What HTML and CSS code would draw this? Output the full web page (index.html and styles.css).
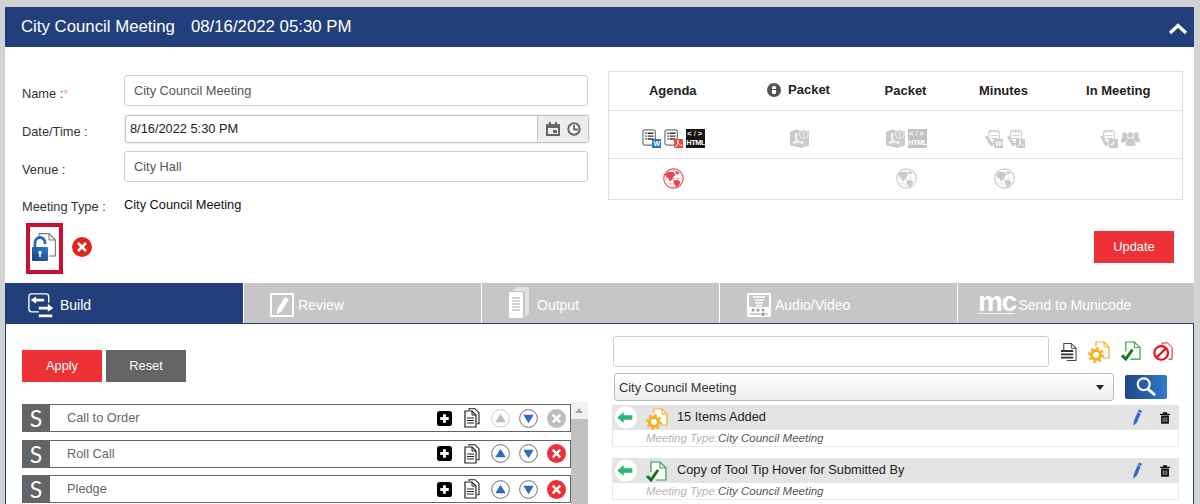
FILE: index.html
```html
<!DOCTYPE html>
<html lang="en">
<head>
<meta charset="utf-8">
<title>City Council Meeting</title>
<link rel="stylesheet" href="styles.css">
</head>
<body>
<svg class="defs" aria-hidden="true">
  <defs>
    <linearGradient id="lockGrad" x1="0" y1="1" x2="1" y2="0"><stop offset="0" stop-color="#1a3f7e"/><stop offset="1" stop-color="#2f7bd0"/></linearGradient>
    <symbol id="x-circle" viewBox="0 0 20 20"><circle cx="10" cy="10" r="10" fill="currentColor"/><path d="M6 6l8 8M14 6l-8 8" stroke="#fff" stroke-width="2.600" fill="none"/></symbol>
    <symbol id="agenda" viewBox="0 0 20 20"><rect x="1" y="1" width="13" height="16" rx="2" fill="#fff" stroke="#777" stroke-width="1.300"/><path d="M3.500 4.500h1.500M6 4.500h6M3.500 7.500h1.500M6 7.500h6M3.500 10.500h1.500M6 10.500h6" stroke="#333" stroke-width="1.500" fill="none"/></symbol>
    <symbol id="acrobat" viewBox="0 0 20 20"><path d="M0 3l7-2.500 5 1.500 8 0v15l-8 3-12-3z" fill="currentColor"/><path d="M3 15c2.500-1 4-5 4-9 0-3-1.500-1-.5 3s3 5 6 6c2.500.5 1.500-1.500-1-1.500-3 0-6 1-8.500 1.500" stroke="#fff" stroke-width="1.100" fill="none"/><circle cx="14.500" cy="5.500" r="4.500" fill="currentColor" stroke="#fff" stroke-width=".8"/><path d="M14.500 3v3M14.500 7v1" stroke="#fff" stroke-width="1.200"/></symbol>
    <symbol id="globe" viewBox="0 0 20 20"><circle cx="10" cy="10" r="9.300" fill="#fff" stroke="currentColor" stroke-width="1"/><path d="M10 .7v18.600M1 10h18M3 5h14M3 15h14M10 1c-5 3-5 15 0 18M10 1c5 3 5 15 0 18" stroke="currentColor" stroke-width=".3" fill="none"/><path d="M2 6l3-2.500 5 .5 2 2.500-2.500 2-.5 2.500-2.500 1.500-1.500-3-2-1zM10 12l4-.5 2.500 1.500-1 3-2.500 2.500-2-3zM12 2.500l3.500 1.500-1 2-2.500-1z" fill="currentColor"/></symbol>
    <symbol id="notepad" viewBox="0 0 20 20"><rect x="5" y="2" width="11" height="13" rx="1" fill="#fff" stroke="currentColor" stroke-width="1.200"/><path d="M7 1v3M10 1v3M13 1v3M7 7h7M7 10h7M9 13h3" stroke="currentColor" stroke-width="1" fill="none"/><path d="M1 8l2-1 7 9-1 2-2 0z" fill="currentColor"/></symbol>
    <symbol id="people" viewBox="0 0 20 20"><circle cx="4" cy="6" r="2.700" fill="currentColor"/><circle cx="16" cy="6" r="2.700" fill="currentColor"/><path d="M0 14c0-4 1-6 4-6s4 2 4 6zM12 14c0-4 1-6 4-6s4 2 4 6z" fill="currentColor"/><circle cx="10" cy="6.500" r="3.300" fill="currentColor" stroke="#fff" stroke-width=".6"/><path d="M4.500 18c0-6 2-8.500 5.500-8.500s5.500 2.500 5.500 8.500z" fill="currentColor" stroke="#fff" stroke-width=".6"/></symbol>
    <symbol id="copy" viewBox="0 0 16 20"><path d="M5 2V.7h6l4 4v11h-2" fill="none" stroke="#222" stroke-width="1.100"/><path d="M1 3h7l4 4v12H1z" fill="#fff" stroke="#222" stroke-width="1.200"/><path d="M8 3v4h4" fill="none" stroke="#222"/><path d="M3 10h7M3 12.500h7M3 15h7" stroke="#222" stroke-width="1"/></symbol>
    <symbol id="plus" viewBox="0 0 16 16"><rect width="16" height="16" rx="3" fill="#000"/><path d="M8 3.500v9M3.500 8h9" stroke="#fff" stroke-width="3"/></symbol>
    <symbol id="arrow-up" viewBox="0 0 20 20"><circle cx="10" cy="10" r="9.300" fill="#fff" stroke="#666" stroke-width="1"/><path d="M10 5l5.500 9h-11z" fill="#2b6cc4"/></symbol>
    <symbol id="arrow-down" viewBox="0 0 20 20"><circle cx="10" cy="10" r="9.300" fill="#fff" stroke="#666" stroke-width="1"/><path d="M10 15l-5.500-9h11z" fill="#2b6cc4"/></symbol>
    <symbol id="arrow-up-off" viewBox="0 0 20 20"><circle cx="10" cy="10" r="9.300" fill="#fff" stroke="#c8c8c8" stroke-width="1"/><path d="M10 5l5.500 9h-11z" fill="#bcbcbc"/></symbol>
    <symbol id="gear-doc" viewBox="0 0 22 22"><path d="M8 5V1h8l5 5v11h-7" fill="#fff" stroke="#f9ae1a" stroke-width="1.200"/><path d="M16 1v5h5" fill="none" stroke="#f9ae1a"/><circle cx="8" cy="14" r="4.500" fill="#fff" stroke="#f9ae1a" stroke-width="3"/><circle cx="8" cy="14" r="7" fill="none" stroke="#f9ae1a" stroke-width="2" stroke-dasharray="2.500 3"/></symbol>
    <symbol id="check-doc" viewBox="0 0 22 22"><path d="M5 11V1h9l6 6v12H10" fill="#fff" stroke="#2e9b3d" stroke-width="1.200"/><path d="M14 1v6h6" fill="none" stroke="#2e9b3d"/><path d="M1 15l4 4 7-10" fill="none" stroke="#0c7a15" stroke-width="3"/></symbol>
    <symbol id="pencil" viewBox="0 0 10 18"><path d="M6.500 0l3.500 1.500L4 15l-3.500 3 .2-4.500z" fill="#2b6cc4"/><path d="M5.500 3l3.500 1.500" stroke="#fff" stroke-width=".8"/></symbol>
    <symbol id="trash" viewBox="0 0 14 16"><path d="M0 3h14M5 3V1h4v2" stroke="#111" stroke-width="1.800" fill="none"/><path d="M1.500 4.500h11V16h-11z" fill="#111"/><path d="M4.500 7v6.500M7 7v6.500M9.500 7v6.500" stroke="#ddd" stroke-width=".9"/></symbol>
    <symbol id="back" viewBox="0 0 28 28"><circle cx="14" cy="14" r="14" fill="#fff"/><path d="M3 14l8-7v4h11v6H11v4z" fill="#2bb673"/></symbol>
  </defs>
</svg>

<header class="panel-head">
  <h1 class="panel-title"><span>City Council Meeting</span><span>08/16/2022 05:30 PM</span></h1>
  <svg class="chevron" viewBox="0 0 20 12"><path d="M2 10l8-7.500L18 10" fill="none" stroke="#fff" stroke-width="3.200"/></svg>
</header>

<section class="meeting">
  <div class="meeting-form">
    <div class="field field-name">
      <label>Name :<em>*</em></label>
      <input class="text-input" value="City Council Meeting">
    </div>
    <div class="field field-date">
      <label>Date/Time :</label>
      <div class="date-group">
        <span class="date-value">8/16/2022 5:30 PM</span>
        <span class="date-addon">
          <svg viewBox="0 0 14 14" class="addon-icon"><path d="M0 2h3V0h2v2h4V0h2v2h3v12H0z" fill="#666"/><path d="M2 6h10v6H2z" fill="#eee"/><path d="M7 8h4v3H7z" fill="#666"/></svg>
          <svg viewBox="0 0 14 14" class="addon-icon"><circle cx="7" cy="7" r="5.700" fill="#fff" stroke="#666" stroke-width="2"/><path d="M7 3v4.500h4" fill="none" stroke="#666" stroke-width="1.800"/></svg>
        </span>
      </div>
    </div>
    <div class="field field-venue">
      <label>Venue :</label>
      <input class="text-input" value="City Hall">
    </div>
    <div class="field field-type">
      <label>Meeting Type :</label>
      <span class="type-value">City Council Meeting</span>
    </div>
    <div class="lock-row">
      <span class="lock-box">
        <svg viewBox="0 0 24 28" class="lock-icon">
          <path d="M7 5V.6h10l6.400 6.400v16H17" fill="none" stroke="#777" stroke-width="1.100"/><path d="M17 .6V7h6.400" fill="none" stroke="#777"/>
          <path d="M3 14V9.500a5 5 0 0 1 10 0V11" fill="none" stroke="#2a68b8" stroke-width="2.800"/>
          <rect x="0" y="14" width="16" height="14" rx="1" fill="url(#lockGrad)"/>
          <circle cx="8" cy="19.500" r="1.700" fill="#fff"/><path d="M7.200 20h1.600v4H7.200z" fill="#fff"/>
        </svg>
      </span>
      <svg class="icon-x-lg"><use href="#x-circle"/></svg>
    </div>
  </div>

  <div class="meeting-side">
    <table class="docs">
      <colgroup><col class="c1"><col class="c2"><col class="c3"><col class="c4"><col class="c5"></colgroup>
      <tr class="docs-head">
        <th>Agenda</th>
        <th><span class="packet-alert"><svg viewBox="0 0 14 14" class="info"><circle cx="7" cy="7" r="7" fill="#555"/><rect x="5" y="3" width="4" height="8" rx="1.500" fill="#fff"/><path d="M5 6.500h4" stroke="#555"/></svg>Packet</span></th>
        <th>Packet</th>
        <th>Minutes</th>
        <th>In Meeting</th>
      </tr>
      <tr class="docs-icons">
        <td><div class="icon-set">
          <span class="doc"><svg><use href="#agenda"/></svg><b class="badge badge-w">W</b></span>
          <span class="doc"><svg><use href="#agenda"/></svg><b class="badge badge-p"><svg viewBox="0 0 9 9"><path d="M1 8c2-1 3-3 3-6 0-2-1 0 0 2s2 2 4 2.500" fill="none" stroke="#fff" stroke-width="1"/></svg></b></span>
          <span class="html"><i>&lt;<u>/</u>&gt;</i>HTML</span>
        </div></td>
        <td class="off"><div class="icon-set"><svg class="ic"><use href="#acrobat"/></svg></div></td>
        <td class="off"><div class="icon-set"><svg class="ic"><use href="#acrobat"/></svg><span class="html html-off"><i>&lt;<u>/</u>&gt;</i>HTML</span></div></td>
        <td class="off"><div class="icon-set">
          <span class="doc"><svg><use href="#notepad"/></svg><b class="badge badge-off">W</b></span>
          <span class="doc"><svg><use href="#notepad"/></svg><b class="badge badge-off"><svg viewBox="0 0 9 9"><path d="M1 8c2-1 3-3 3-6 0-2-1 0 0 2s2 2 4 2.500" fill="none" stroke="#fff" stroke-width="1"/></svg></b></span>
        </div></td>
        <td class="off"><div class="icon-set">
          <span class="doc"><svg><use href="#notepad"/></svg><b class="badge badge-off">&#10003;</b></span>
          <svg class="ic"><use href="#people"/></svg>
        </div></td>
      </tr>
      <tr class="docs-web">
        <td class="web-on"><div class="icon-set"><svg class="globe"><use href="#globe"/></svg></div></td>
        <td></td>
        <td class="off"><div class="icon-set"><svg class="globe"><use href="#globe"/></svg></div></td>
        <td class="off"><div class="icon-set"><svg class="globe"><use href="#globe"/></svg></div></td>
        <td></td>
      </tr>
    </table>
    <button class="btn btn-red btn-update">Update</button>
  </div>
</section>

<nav class="tabs">
  <a class="tab tab-active">
    <svg viewBox="0 0 30 28" class="tab-icon"><rect x="1" y="1" width="22" height="20" rx="3" fill="none" stroke="#fff" stroke-width="1.500"/><path d="M3 8l6-4v2.500h9v3H9V12z" fill="#fff"/><rect x="12" y="11" width="17" height="16" rx="2" fill="#223f7c"/><path d="M28 17l-6 4v-2.500h-10v-3h10V12z" fill="#fff"/><path d="M12 24h15v3H12z" fill="#fff"/></svg><span>Build</span>
  </a>
  <a class="tab">
    <svg viewBox="0 0 24 24" class="tab-icon tab-icon-sq"><rect x="1" y="1" width="22" height="22" fill="none" stroke="#fff" stroke-width="2"/><path d="M15 4l4 2-8 13-4 2 .5-5z" fill="#fff"/></svg><span>Review</span>
  </a>
  <a class="tab">
    <svg viewBox="0 0 24 32" class="tab-icon tab-icon-tall"><path d="M8 1h12v26" fill="none" stroke="#fff"/><path d="M5 3h13v26" fill="none" stroke="#fff"/><rect x="1" y="5" width="14" height="26" rx="1" fill="#fff"/><path d="M4 11h8M4 14h8M4 17h8M4 20h8M4 23h8" stroke="#c6c6c6" stroke-width="1.500"/></svg><span>Output</span>
  </a>
  <a class="tab tab-av">
    <svg viewBox="0 0 24 24" class="tab-icon tab-icon-sq"><rect width="24" height="24" rx="1.500" fill="#fff"/><path d="M2 2h20v12H2z" fill="#c6c6c6"/><path d="M6 4h12M8 7h9M8 10h8M9 12.500h6" stroke="#fff" stroke-width="1.300"/><circle cx="6" cy="17" r="1.500" fill="#999"/><circle cx="11" cy="17" r="1.500" fill="#999"/><circle cx="16" cy="17" r="1.500" fill="#999"/><path d="M3 21h18" stroke="#999"/><rect x="15" y="19.500" width="2" height="3.500" fill="#999"/></svg><span>Audio/Video</span>
  </a>
  <a class="tab tab-mc">
    <span class="mc-logo">mc</span><span>Send to Municode</span>
  </a>
</nav>

<main class="workspace">
  <section class="build">
    <div class="build-actions">
      <button class="btn btn-red btn-action">Apply</button>
      <button class="btn btn-grey btn-action">Reset</button>
    </div>
    <div class="outline">
      <ul class="outline-list">
        <li class="outline-row"><span class="tag">S</span><span class="row-name">Call to Order</span>
          <span class="row-tools"><svg class="t-plus"><use href="#plus"/></svg><svg class="t-copy"><use href="#copy"/></svg><svg class="t-c"><use href="#arrow-up-off"/></svg><svg class="t-c"><use href="#arrow-down"/></svg><svg class="t-c x-off"><use href="#x-circle"/></svg></span></li>
        <li class="outline-row"><span class="tag">S</span><span class="row-name">Roll Call</span>
          <span class="row-tools"><svg class="t-plus"><use href="#plus"/></svg><svg class="t-copy"><use href="#copy"/></svg><svg class="t-c"><use href="#arrow-up"/></svg><svg class="t-c"><use href="#arrow-down"/></svg><svg class="t-c x-on"><use href="#x-circle"/></svg></span></li>
        <li class="outline-row"><span class="tag">S</span><span class="row-name">Pledge</span>
          <span class="row-tools"><svg class="t-plus"><use href="#plus"/></svg><svg class="t-copy"><use href="#copy"/></svg><svg class="t-c"><use href="#arrow-up"/></svg><svg class="t-c"><use href="#arrow-down"/></svg><svg class="t-c x-on"><use href="#x-circle"/></svg></span></li>
      </ul>
      <div class="scroll"><span class="scroll-up"></span><span class="scroll-thumb"></span></div>
    </div>
  </section>

  <section class="library">
    <div class="search-row">
      <input class="text-input search-input">
      <div class="filter-icons">
        <svg viewBox="0 0 18 20"><path d="M4 10V1h8l5 5v13H7" fill="#fff" stroke="#444" stroke-width="1.100"/><path d="M12 1v5h5" fill="none" stroke="#444"/><path d="M1 9h13M1 12.500h13M1 16h13" stroke="#333" stroke-width="2"/></svg>
        <svg><use href="#gear-doc"/></svg>
        <svg><use href="#check-doc"/></svg>
        <svg viewBox="0 0 22 22"><path d="M10 3V1h6l5 5v13h-4" fill="#fff" stroke="#e8141c" stroke-width="1.100"/><circle cx="9" cy="12" r="7.500" fill="#fff" stroke="#e8141c" stroke-width="2.400"/><path d="M4 17L14 7" stroke="#e8141c" stroke-width="2.400"/></svg>
      </div>
    </div>
    <div class="select-row">
      <div class="select"><span>City Council Meeting</span><i class="caret"></i></div>
      <button class="search-btn"><svg viewBox="0 0 24 24"><circle cx="9.500" cy="9" r="6.500" fill="none" stroke="#fff" stroke-width="2.400"/><path d="M14 14l8 7" stroke="#fff" stroke-width="3.200"/></svg></button>
    </div>
    <article class="item">
      <div class="item-head"><svg class="back"><use href="#back"/></svg><svg class="item-type"><use href="#gear-doc"/></svg><span class="item-title">15 Items Added</span><svg class="pencil"><use href="#pencil"/></svg><svg class="trash"><use href="#trash"/></svg></div>
      <div class="item-meta"><span>Meeting Type:</span>City Council Meeting</div>
    </article>
    <article class="item">
      <div class="item-head"><svg class="back"><use href="#back"/></svg><svg class="item-type"><use href="#check-doc"/></svg><span class="item-title">Copy of Tool Tip Hover for Submitted By</span><svg class="pencil"><use href="#pencil"/></svg><svg class="trash"><use href="#trash"/></svg></div>
      <div class="item-meta"><span>Meeting Type:</span>City Council Meeting</div>
    </article>
  </section>
</main>
</body>
</html>
```

FILE: styles.css
```css
* { box-sizing: border-box; }
html, body { height: 504px; overflow: hidden; }
body {
  margin: 0;
  padding: 7px 6px 0 5px;
  background: #d1d2d4;
  font: 12.800px "Liberation Sans", Arial, sans-serif;
  color: #222;
}
.defs { display: block; width: 0; height: 0; }
svg { display: block; }

.panel-head {
  height: 40px;
  background: #223f7c;
  display: flex;
  align-items: center;
  justify-content: space-between;
  padding: 0 6px 0 16px;
}
.panel-title {
  margin: 0;
  display: flex;
  gap: 16px;
  font-size: 16.800px;
  font-weight: 400;
  color: #fff;
}
.chevron { width: 20px; height: 12px; margin-top: 3px; }

.meeting {
  height: 236px;
  background: #fff;
  display: flex;
  gap: 20px;
  padding: 24px 11px 0 17px;
}
.meeting-form { width: 567px; }
.meeting-side { flex: 1; display: flex; flex-direction: column; }

.field { display: flex; align-items: center; }
.field label { width: 102px; flex: none; color: #333; }
.field label em { color: #f5a5a5; font-style: normal; }
.field-name { margin-top: 4px; height: 31px; }
.field-name label { padding-top: 5px; }
.field-date { margin-top: 9px; height: 28px; }
.field-date label { padding-top: 4px; }
.field-venue { margin-top: 8px; height: 31px; }
.field-venue label { padding-top: 5px; }
.field-type { margin-top: 13px; height: 26px; align-items: flex-start; }
.field-type label { padding-top: 4px; }
.type-value { color: #111; padding-top: 2px; }

.text-input {
  flex: 1;
  min-width: 0;
  height: 100%;
  border: 1px solid #ccd0d4;
  border-radius: 3px;
  padding: 0 9px;
  font: inherit;
  color: #555;
  background: #fff;
  outline: none;
}
.date-group {
  flex: 1;
  margin: 0 -1px 0 1px;
  height: 100%;
  display: flex;
  border: 1px solid #c4c6c8;
  border-radius: 3px;
  box-shadow: 0 0 2px #c4c6c8;
  overflow: hidden;
}
.date-value { flex: 1; padding: 5px 4px 0; color: #222; }
.date-addon {
  width: 51px;
  display: flex;
  align-items: center;
  justify-content: center;
  gap: 7px;
  background: #ececec;
  border-left: 1px solid #c4c6c8;
}
.addon-icon { width: 14px; height: 14px; }

.lock-row { display: flex; align-items: center; gap: 9px; margin-left: 4px; margin-top: 2px; }
.lock-box {
  width: 37px;
  height: 51px;
  border: 4px solid #c8102e;
  display: flex;
  align-items: center;
  justify-content: center;
}
.lock-icon { width: 24px; height: 28px; margin: -3px 0 0 -1px; }
.icon-x-lg { width: 20px; height: 20px; color: #e1251b; margin-top: -3px; }

.docs {
  width: 574px;
  table-layout: fixed;
  border-collapse: collapse;
  border: 1px solid #dfe0e2;
}
.c1 { width: 130px; }
.c2 { width: 122px; }
.c3 { width: 92px; }
.c4 { width: 104px; }
.c5 { width: 126px; }
.docs tr + tr { border-top: 1px solid #dfe0e2; }
.docs-head { height: 39px; }
.docs-icons { height: 48px; }
.docs-web { height: 41px; }
.docs th { font-size: 13px; font-weight: 700; color: #222; padding: 0 2px 2px 0; }
.docs td { padding: 0; }
.docs-icons td { padding-top: 8px; }
.docs-web td { padding-bottom: 2px; }
.packet-alert { display: inline-flex; align-items: center; gap: 7px; vertical-align: -1px; }
.info { width: 14px; height: 14px; margin-top: 1px; }
.icon-set { display: flex; justify-content: center; align-items: center; gap: 3px; color: #c9c9c9; }
.ic { width: 19px; height: 19px; }
.globe { width: 21px; height: 21px; }
.web-on .icon-set { color: #e0474c; }
.off { color: #c9c9c9; }

.doc { position: relative; width: 19px; height: 19px; display: block; color: #c9c9c9; }
.doc > svg { width: 19px; height: 19px; }
.badge {
  position: absolute;
  right: 0;
  bottom: 0;
  width: 9px;
  height: 9px;
  font-size: 7px;
  line-height: 9px;
  text-align: center;
  color: #fff;
}
.badge svg { width: 9px; height: 9px; }
.badge-w { background: #2a78c6; }
.badge-p { background: #e8483f; }
.badge-off { background: #c9c9c9; }
.html {
  width: 19px;
  height: 19px;
  background: #161616;
  color: #fff;
  font-size: 7.500px;
  font-weight: 700;
  line-height: 9px;
  text-align: center;
  letter-spacing: -.5px;
  display: block;
  white-space: nowrap;
}
.html i { display: block; font-style: normal; letter-spacing: 2px; }
.html u { text-decoration: none; color: #f5c04a; }
.html-off { background: #c2c2c2; }
.html-off u { color: #eee; }

.btn { border: 0; color: #fff; font: inherit; padding: 0 0 1px; }
.btn-red { background: #ee3136; }
.btn-grey { background: #636466; }
.btn-update { width: 80px; height: 32px; margin: 31px 9px 0 auto; }
.btn-action { width: 80px; height: 32px; }

.tabs { display: grid; grid-template-columns: 238px 237px 237px 237px 1fr; height: 40px; gap: 1px; background: #fff; }
.tab {
  min-width: 0;
  display: flex;
  align-items: center;
  padding: 4px 0 0 26px;
  background: #c6c6c6;
  color: #fff;
  font-size: 14px;
}
.tab-active { background: #223f7c; padding-left: 23px; }
.tab-av { padding-left: 27px; }
.tab-icon { width: 27px; height: 27px; margin-right: 4px; flex: none; }
.tab-active .tab-icon { margin-right: 5px; }
.tab-icon-sq { width: 24px; height: 24px; }
.tab-icon-tall { width: 24px; height: 32px; margin: -4px 5px 0 0; }
.tab-mc { padding-left: 20px; }
.mc-logo {
  font-size: 28px;
  font-weight: 700;
  line-height: 22px;
  letter-spacing: -1.500px;
  margin: -5px 3px 0 0;
  border-bottom: 1px solid #eee;
}

.workspace {
  height: 181px;
  display: flex;
  gap: 25px;
  background: #fff;
  border: 1px solid #223f7c;
  border-bottom: 0;
  padding: 0 14px 0 16px;
}
.build { width: 566px; padding-top: 26px; }
.build-actions { display: flex; gap: 4px; }
.outline { display: flex; margin-top: 20px; }
.outline-list { list-style: none; margin: 0; padding: 2px 0 0; width: 549px; }
.outline-row {
  height: 28px;
  margin-bottom: 7.500px;
  display: flex;
  align-items: center;
  border: 1px solid #636466;
  border-left: 0;
}
.tag {
  width: 28px;
  height: 28px;
  margin: -1px 0;
  background: #636466;
  color: #fff;
  font-family: Lato, sans-serif;
  font-size: 23px;
  display: flex;
  align-items: center;
  justify-content: center;
}
.row-name { flex: 1; padding: 0 0 1px 17px; color: #666; }
.row-tools { display: flex; align-items: center; padding-right: 4px; }
.t-plus { width: 15px; height: 15px; }
.t-copy { width: 16px; height: 20px; margin-left: 12px; }
.t-c { width: 19px; height: 19px; margin-left: 9px; }
.t-c:nth-child(3) { margin-left: 11px; }
.row-tools .x-off { color: #bdbdbd; }
.row-tools .x-on { color: #ee3136; }
.scroll { width: 17px; background: #f1f1f1; display: flex; flex-direction: column; height: 102px; }
.scroll-up { height: 17px; position: relative; }
.scroll-up::after {
  content: "";
  position: absolute;
  left: 4px;
  top: 6px;
  border: 4px solid transparent;
  border-top: 0;
  border-bottom: 5px solid #a3a3a3;
}
.scroll-thumb { flex: 1; background: #c1c1c1; }

.library { width: 566px; padding-top: 12px; }
.search-row { display: flex; align-items: center; height: 31px; }
.search-input { flex: none; width: 436px; }
.filter-icons { display: flex; align-items: center; gap: 11px; margin-left: 11px; }
.filter-icons svg { width: 20px; height: 20px; }
.filter-icons svg:nth-child(1) { width: 17px; }
.filter-icons svg:nth-child(2) { width: 22px; height: 22px; }
.filter-icons svg:nth-child(3) { width: 21px; height: 21px; }
.select-row { display: flex; align-items: center; margin-top: 6px; height: 28px; }
.select {
  width: 500px;
  height: 28px;
  margin-left: 1px;
  display: flex;
  align-items: center;
  justify-content: space-between;
  padding: 1px 9px 0 4px;
  border: 1px solid #b9bbbe;
  border-radius: 3px;
  background: linear-gradient(#fff, #ededed);
  color: #333;
}
.caret { border: 4px solid transparent; border-top: 5px solid #222; border-bottom: 0; }
.search-btn {
  width: 42px;
  height: 24px;
  margin-left: 11px;
  border: 0;
  border-radius: 2px;
  padding: 0;
  display: flex;
  align-items: center;
  justify-content: center;
  background: linear-gradient(90deg, #1f4587, #2f7bd0);
}
.search-btn svg { width: 22px; height: 22px; }

.item { border: 1px solid #e9e9e9; border-top: 0; height: 42px; margin: 0 0 11px -1px; }
.select-row + .item { margin-top: 4px; }
.item-head {
  height: 25px;
  margin: 0 -1px;
  display: flex;
  align-items: center;
  background: #e4e4e4;
  padding-left: 3px;
}
.back { width: 22px; height: 23px; flex: none; }
.item-type { width: 22px; height: 22px; margin: 2px 0 0 9px; flex: none; }
.item-title { flex: 1; margin-left: 9px; color: #222; padding-bottom: 3px; }
.pencil { width: 9px; height: 17px; flex: none; }
.trash { width: 10px; height: 12px; margin: 0 9px 0 18px; flex: none; }
.item-meta { padding-left: 33px; font-size: 11.500px; font-style: italic; color: #555; line-height: 16px; }
.item-meta span { color: #b5b5b5; }
```
